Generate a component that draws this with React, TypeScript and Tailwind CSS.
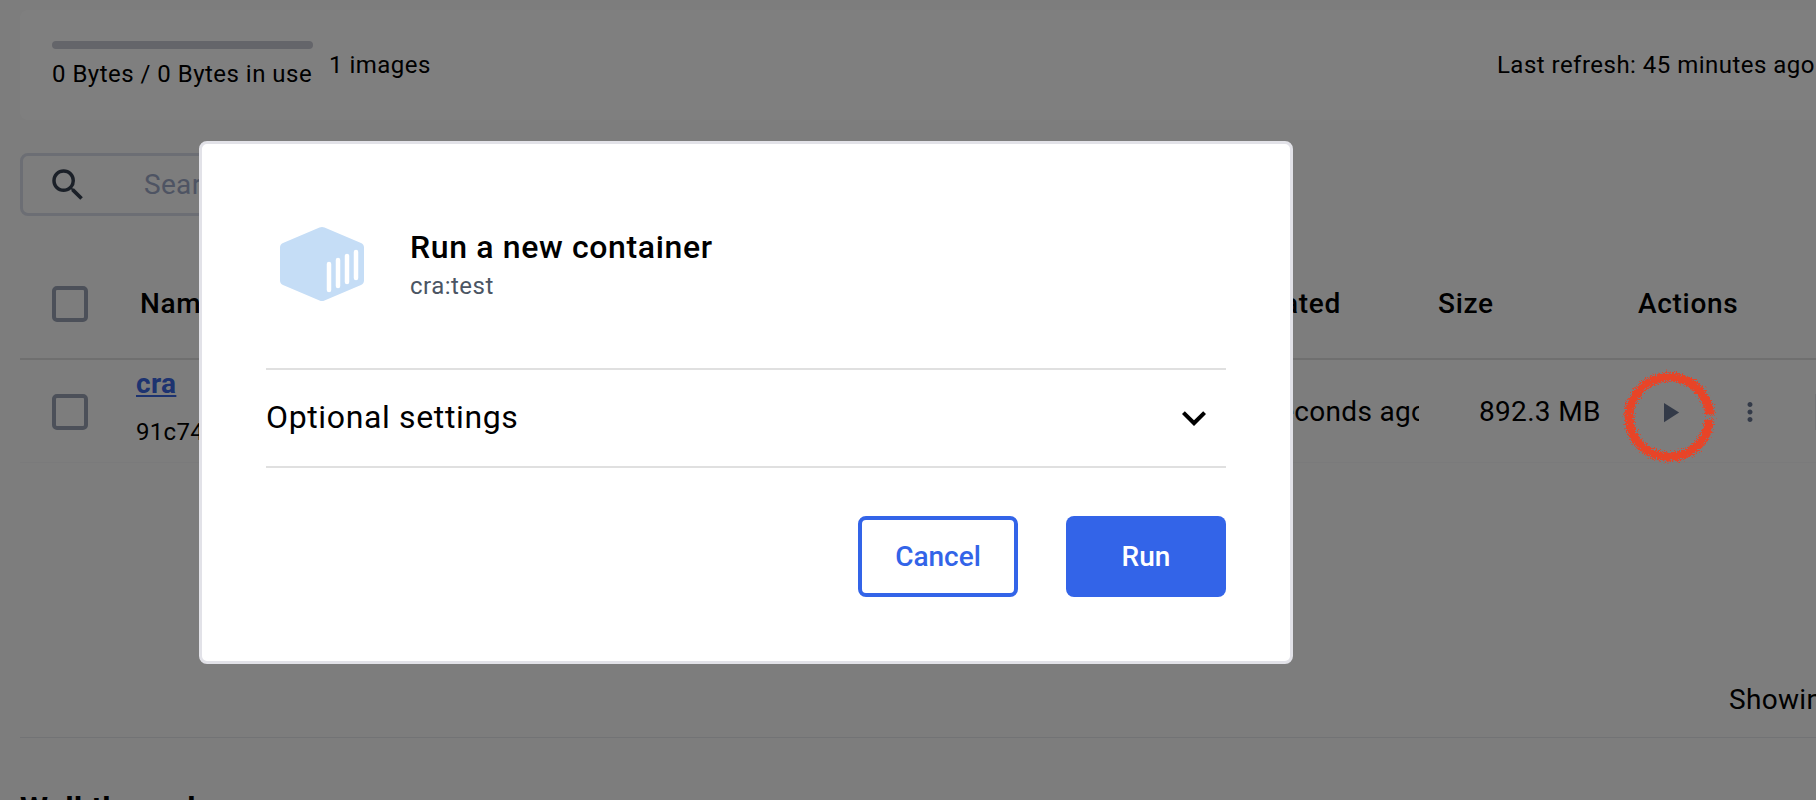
import { MdExpandMore, MdMoreVert, MdPlayArrow, MdSearch } from "react-icons/md";

function Checkbox() {
  return <div className="h-9 w-9 shrink-0 rounded-[5px] border-4 border-[#98a1b2]" />;
}

function ContainerIcon() {
  return (
    <svg viewBox="0 0 84 74" className="h-[74px] w-[84px] shrink-0">
      <path
        d="M39.5 0.6 a6 6 0 0 1 5 0 L81 16 a5 5 0 0 1 3 4.5 V53.5 a5 5 0 0 1 -3 4.5 L44.5 73.4 a6 6 0 0 1 -5 0 L3 58 a5 5 0 0 1 -3 -4.5 V20.5 a5 5 0 0 1 3 -4.5 Z"
        fill="#c5ddf6"
      />
      <g stroke="#fff" strokeWidth="4.5" strokeLinecap="round">
        <line x1="49" y1="37" x2="49" y2="63" />
        <line x1="58" y1="33" x2="58" y2="59" />
        <line x1="67" y1="29" x2="67" y2="55" />
        <line x1="76" y1="25" x2="76" y2="51" />
      </g>
    </svg>
  );
}

function RunDialog() {
  return (
    <div className="absolute left-[199px] top-[141px] z-20 h-[523px] w-[1094px] rounded-lg border-[3px] border-[#e2e2e8] bg-white px-[64px]">
      <div className="flex h-[226px] items-center border-b-2 border-[#e0e0e0] pl-[14px] pt-4">
        <ContainerIcon />
        <div className="ml-[46px] flex flex-col">
          <h2 className="text-[32px] font-medium leading-[40px] tracking-[0.02em] text-black">Run a new container</h2>
          <p className="mt-1 text-[24px] leading-[30px] tracking-[0.02em] text-[#4b5563]">cra:test</p>
        </div>
      </div>
      <div className="flex h-[98px] items-center justify-between border-b-2 border-[#e0e0e0]">
        <span className="pb-[2px] text-[32px] tracking-[0.02em] text-black">Optional settings</span>
        <MdExpandMore className="mr-2 text-black" size={48} />
      </div>
      <div className="mt-12 flex justify-end gap-12">
        <button className="flex h-[81px] w-[160px] items-center justify-center rounded-lg border-4 border-[#3364e8] bg-white text-[28px] font-medium tracking-normal text-[#3364e8]">
          Cancel
        </button>
        <button className="flex h-[81px] w-[160px] items-center justify-center rounded-lg bg-[#3364e8] text-[28px] font-medium tracking-normal text-white">
          Run
        </button>
      </div>
    </div>
  );
}

// red marker ring drawn around the play button
function MarkerRing() {
  return (
    <svg viewBox="0 0 100 100" className="absolute left-[1619px] top-[367px] z-30 h-[100px] w-[100px]">
      <defs>
        <filter id="rough" x="-10%" y="-10%" width="120%" height="120%" colorInterpolationFilters="sRGB">
          <feTurbulence type="fractalNoise" baseFrequency="0.8" numOctaves="2" seed="4" result="noise" />
          <feDisplacementMap in="SourceGraphic" in2="noise" scale="10" xChannelSelector="R" yChannelSelector="G" />
        </filter>
      </defs>
      <path
        d="M91 48 C88 24 70 10 50 10 C28 10 10 28 10 50 C10 72 28 90 50 90 C72 90 90 73 90 52"
        fill="none"
        stroke="#e84427"
        strokeWidth="9"
        filter="url(#rough)"
      />
    </svg>
  );
}

export default function App() {
  return (
    <div className="relative h-[800px] w-[1816px] overflow-hidden bg-[#fafafa] pl-5 font-['Roboto',sans-serif] tracking-[0.02em] text-black">
      {/* Page behind the dialog */}
      <div className="pt-[10px]">
        <div className="flex h-[110px] items-start rounded-l-lg bg-white pl-8 pt-[31px] tracking-[0.03em]">
          <div className="w-[261px]">
            <div className="h-2 rounded-full bg-[#c8cad4]" />
            <div className="mt-[10px] whitespace-nowrap text-[24px] leading-[30px]">0 Bytes / 0 Bytes in use</div>
          </div>
          <div className="ml-4 mt-[9px] text-[24px] leading-[30px]">1 images</div>
          <div className="ml-auto mt-[9px] pr-px text-[24px] leading-[30px]">Last refresh: 45 minutes ago</div>
        </div>

        <div className="mt-[33px] flex h-[63px] w-[500px] items-center rounded-lg border-[3px] border-[#d8dce8] pl-6">
          <MdSearch className="text-[#374151]" size={42} />
          <span className="ml-[55px] text-[28px] text-[#9da8c6]">Search</span>
        </div>

        <div className="mt-8 flex h-[112px] items-center border-b-2 border-[#dedede] pl-8 pt-[2px] text-[28px] font-medium tracking-[0.025em]">
          <Checkbox />
          <span className="ml-[52px] w-[1098px]">Name</span>
          <span className="w-[200px]">Created</span>
          <span className="w-[200px]">Size</span>
          <span>Actions</span>
        </div>

        <div className="flex h-[103px] items-center border-b border-[#f5f5f6] pl-8 pt-[2px] text-[28px]">
          <Checkbox />
          <div className="ml-[48px] w-[1089px] pb-[9px]">
            <a className="block text-[28px] font-bold leading-[30px] text-[#3b66e0] underline">cra</a>
            <div className="mt-[18px] text-[24px] leading-[30px]">91c74</div>
          </div>
          <span className="w-[194px] overflow-hidden whitespace-nowrap">28 seconds ago</span>
          <span className="ml-[60px] w-[174px] whitespace-nowrap">892.3 MB</span>
          <MdPlayArrow className="text-[#667490]" size={33} />
          <MdMoreVert className="ml-[49px] text-[#667490]" size={30} />
          <div className="ml-auto h-9 w-px bg-[#e5e7eb]" />
        </div>

        <div className="flex h-[275px] flex-col justify-end border-b border-[#e5e7eb]">
          <div className="mb-4 ml-[1709px] whitespace-nowrap text-[28px]">Showing</div>
        </div>

        <h3 className="mt-[50px] text-[32px] font-bold leading-[40px]">Walkthroughs</h3>
      </div>

      {/* Backdrop */}
      <div className="absolute inset-0 z-10 bg-black/50" />
      <RunDialog />
      <MarkerRing />
    </div>
  );
}
